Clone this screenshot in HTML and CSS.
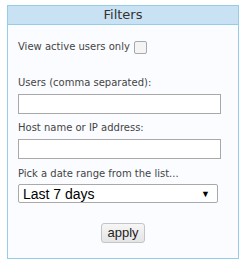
FILE: index.html
```html
<!DOCTYPE html>
<html>
<head>
<meta charset="utf-8">
<link rel="stylesheet" href="styles.css">
</head>
<body>
<div class="panel">
  <div class="panel-head">Filters</div>
  <div class="panel-body">
    <div class="row check-row">
      <span class="lbl">View active users only</span>
      <span class="checkbox"></span>
    </div>
    <div class="row field">
      <div class="lbl">Users (comma separated):</div>
      <div class="input"></div>
    </div>
    <div class="row field tight">
      <div class="lbl">Host name or IP address:</div>
      <div class="input"></div>
    </div>
    <div class="row field tight date">
      <div class="lbl">Pick a date range from the list...</div>
      <div class="select"><span>Last 7 days</span><span class="arrow">▼</span></div>
    </div>
    <div class="actions">
      <span class="btn">apply</span>
    </div>
  </div>
</div>
</body>
</html>
```
FILE: styles.css
```css
html, body { margin: 0; padding: 0; background: #ffffff; }
body { padding: 5px 0 0 7px; }
.panel {
  width: 230px;
  height: 252px;
  border: 1px solid #93cdea;
  background: #fafcff;
  font-family: "DejaVu Sans", Verdana, sans-serif;
  color: #444;
  box-sizing: content-box;
}
.panel-head {
  height: 18px;
  line-height: 18px;
  background: #c9e2f3;
  border-bottom: 1px solid #93cdea;
  text-align: center;
  font-size: 13px;
  color: #333;
}
.panel-body { padding: 0 0 0 10px; }
.lbl { font-size: 10px; color: #444; line-height: 12px; }
.check-row { display: flex; align-items: center; margin-top: 15px; height: 14px; }
.checkbox {
  width: 11px; height: 11px; margin-left: 4px;
  border: 1px solid #a9a9a9; border-radius: 2px; background: #f4f4f4;
}
.field { margin-top: 23px; }
.field.tight { margin-top: 8px; }
.field.date { margin-top: 9px; }
.input {
  margin-top: 5px;
  width: 201px; height: 18px;
  border: 1px solid #a9a9a9; background: #fff;
}
.select {
  margin-top: 4px;
  height: 17px;
  border: 1px solid #a9a9a9; border-radius: 2px; background: #fff;
  display: flex; align-items: center; justify-content: space-between;
  font-family: "Liberation Sans", Arial, sans-serif; font-size: 14px; color: #000;
  padding: 0 7px 0 4px; width: 187px; box-sizing: content-box;
}
.arrow { font-size: 9px; }
.actions { display: flex; justify-content: center; padding-right: 10px; margin-top: 20px; }
.btn {
  font-family: "Liberation Sans", Arial, sans-serif; font-size: 13px; color: #222;
  border: 1px solid #c4c4c4; border-radius: 3px; background: linear-gradient(#f6f6f6, #e4e4e4);
  padding: 1px 5px 2px; line-height: 15px;
}
```
